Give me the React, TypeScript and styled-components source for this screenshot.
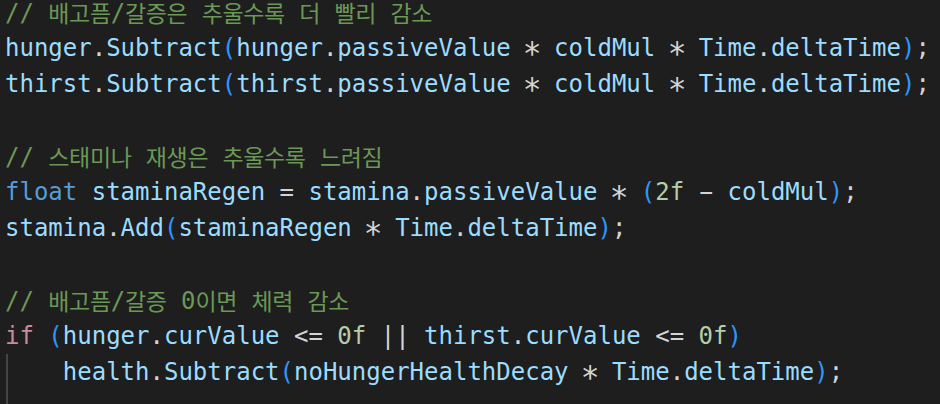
import React from "react";
import styled, { createGlobalStyle, css } from "styled-components";

const Global = createGlobalStyle`
  html, body {
    margin: 0;
    padding: 0;
    background: #1e1e1e;
    overflow: hidden;
  }
`;

type Kind = "var" | "punc" | "paren" | "kw" | "ctrl" | "num" | "cmt" | "star" | "dash";

const COLORS: Record<Kind, string> = {
  var: "#9cdcfe",
  punc: "#d4d4d4",
  star: "#d4d4d4",
  dash: "#d4d4d4",
  paren: "#2f95fb",
  kw: "#569cd6",
  ctrl: "#c98a9e",
  num: "#b5cea8",
  cmt: "#6a9955",
};

const Editor = styled.div`
  width: 940px;
  height: 404px;
  background: #1e1e1e;
  overflow: hidden;
`;

const CodeBlock = styled.div`
  padding-left: 5px;
  font-family: "DejaVu Sans Mono", "Liberation Mono", "Noto Sans CJK KR", monospace;
  font-size: 24px;
  line-height: 24px;
  white-space: pre;
`;

const Line = styled.div<{ $guide?: boolean }>`
  position: relative;
  height: 36px;
  &::before {
    content: "";
    display: ${(p) => (p.$guide ? "block" : "none")};
    position: absolute;
    left: 1px;
    top: -6px;
    height: 36px;
    width: 2px;
    background: #444444;
  }
`;

const Token = styled.span<{ $kind: Kind }>`
  color: ${(p) => COLORS[p.$kind]};
  ${(p) =>
    p.$kind === "star" &&
    css`
      display: inline-block;
      transform: translateY(6px) scale(1.3);
    `}
  ${(p) =>
    p.$kind === "dash" &&
    css`
      display: inline-block;
      transform: scaleX(1.9);
    `}
`;

const Hangul = styled.span`
  font-family: "Noto Sans CJK KR", sans-serif;
  font-size: 23px;
  letter-spacing: -0.4px;
  vertical-align: -1px;
`;

type Tok = [string, Kind];

const HANGUL = /([\uAC00-\uD7A3\u3130-\u318F]+)/;

const withHangul = (text: string) =>
  text.split(HANGUL).map((part, i) =>
    /[\uAC00-\uD7A3\u3130-\u318F]/.test(part) ? (
      <Hangul key={i}>{part}</Hangul>
    ) : (
      <React.Fragment key={i}>{part}</React.Fragment>
    )
  );

const TIMES: Tok[] = [
  [" ", "punc"],
  ["*", "star"],
  [" ", "punc"],
];

const subtractLine = (name: string): Tok[] => [
  [name, "var"],
  [".", "punc"],
  ["Subtract", "var"],
  ["(", "paren"],
  [name, "var"],
  [".", "punc"],
  ["passiveValue", "var"],
  ...TIMES,
  ["coldMul", "var"],
  ...TIMES,
  ["Time", "var"],
  [".", "punc"],
  ["deltaTime", "var"],
  [")", "paren"],
  [";", "punc"],
];

const LINES: { toks: Tok[]; guide?: boolean }[] = [
  { toks: [["// 배고픔/갈증은 추울수록 더 빨리 감소", "cmt"]] },
  { toks: subtractLine("hunger") },
  { toks: subtractLine("thirst") },
  { toks: [] },
  { toks: [["// 스태미나 재생은 추울수록 느려짐", "cmt"]] },
  {
    toks: [
      ["float", "kw"],
      [" ", "punc"],
      ["staminaRegen", "var"],
      [" = ", "punc"],
      ["stamina", "var"],
      [".", "punc"],
      ["passiveValue", "var"],
      ...TIMES,
      ["(", "paren"],
      ["2f", "num"],
      [" ", "punc"],
      ["-", "dash"],
      [" ", "punc"],
      ["coldMul", "var"],
      [")", "paren"],
      [";", "punc"],
    ],
  },
  {
    toks: [
      ["stamina", "var"],
      [".", "punc"],
      ["Add", "var"],
      ["(", "paren"],
      ["staminaRegen", "var"],
      ...TIMES,
      ["Time", "var"],
      [".", "punc"],
      ["deltaTime", "var"],
      [")", "paren"],
      [";", "punc"],
    ],
  },
  { toks: [] },
  { toks: [["// 배고픔/갈증 0이면 체력 감소", "cmt"]] },
  {
    toks: [
      ["if", "ctrl"],
      [" ", "punc"],
      ["(", "paren"],
      ["hunger", "var"],
      [".", "punc"],
      ["curValue", "var"],
      [" <= ", "punc"],
      ["0f", "num"],
      [" || ", "punc"],
      ["thirst", "var"],
      [".", "punc"],
      ["curValue", "var"],
      [" <= ", "punc"],
      ["0f", "num"],
      [")", "paren"],
    ],
  },
  {
    guide: true,
    toks: [
      ["    ", "punc"],
      ["health", "var"],
      [".", "punc"],
      ["Subtract", "var"],
      ["(", "paren"],
      ["noHungerHealthDecay", "var"],
      ...TIMES,
      ["Time", "var"],
      [".", "punc"],
      ["deltaTime", "var"],
      [")", "paren"],
      [";", "punc"],
    ],
  },
  { guide: true, toks: [] },
];

export default function App() {
  return (
    <Editor>
      <Global />
      <CodeBlock>
        {LINES.map((line, i) => (
          <Line key={i} $guide={line.guide}>
            {line.toks.map(([text, kind], j) => (
              <Token key={j} $kind={kind}>
                {kind === "cmt" ? withHangul(text) : text}
              </Token>
            ))}
          </Line>
        ))}
      </CodeBlock>
    </Editor>
  );
}
